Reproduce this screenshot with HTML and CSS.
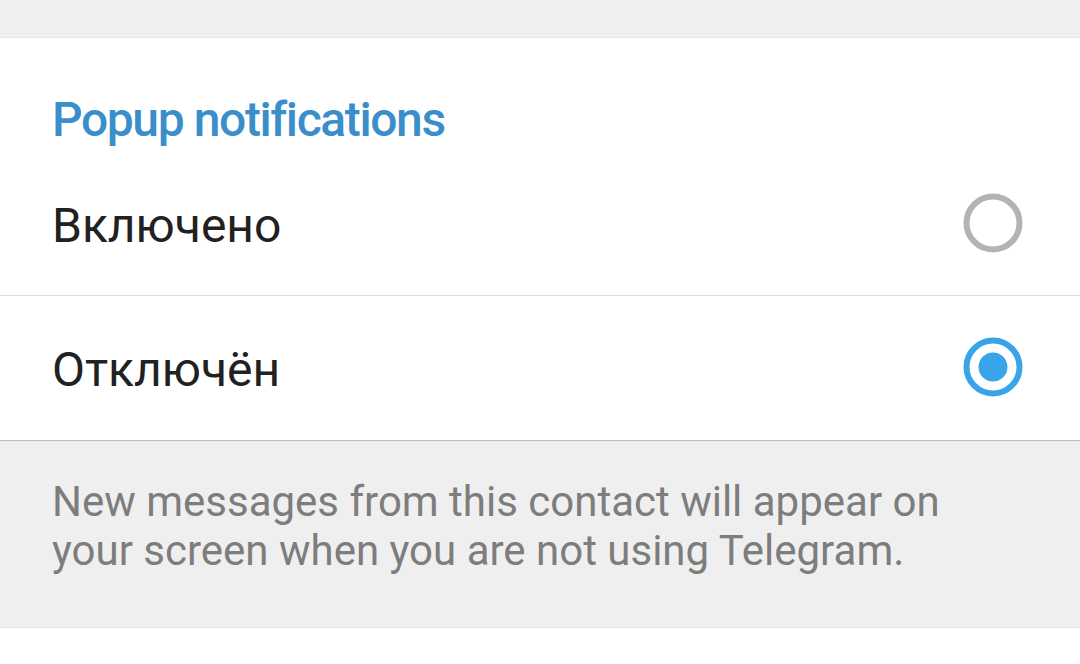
FILE: index.html
```html
<!DOCTYPE html>
<html lang="ru">
<head>
<meta charset="utf-8">
<link rel="stylesheet" href="styles.css">
</head>
<body>
<div class="top-band"></div>
<section class="card">
  <h2 class="card-title">Popup notifications</h2>
  <div class="option">
    <span class="option-label">Включено</span>
    <svg class="radio" width="60" height="60" viewBox="0 0 60 60"><circle cx="30" cy="30" r="26.5" fill="none" stroke="#b3b3b3" stroke-width="6"/></svg>
  </div>
  <div class="option option-last">
    <span class="option-label">Отключён</span>
    <svg class="radio" width="60" height="60" viewBox="0 0 60 60"><circle cx="30" cy="30" r="26.5" fill="none" stroke="#37a5e7" stroke-width="6"/><circle cx="30" cy="30" r="14.5" fill="#37a5e7"/></svg>
  </div>
</section>
<div class="info">
  <p class="info-text">New messages from this contact will appear on your screen when you are not using Telegram.</p>
</div>
<div class="rest"></div>
</body>
</html>
```
FILE: styles.css
```css
html, body {
  margin: 0;
  padding: 0;
  background: #ffffff;
  font-family: Roboto, "Noto Sans", "Liberation Sans", sans-serif;
}
.top-band {
  height: 37px;
  background: #efefef;
  border-bottom: 1px solid #e6e6e6;
}
.card {
  background: #ffffff;
  box-shadow: 0 1px 1px rgba(0,0,0,0.12);
  position: relative;
}
.card-title {
  margin: 0;
  padding: 54px 52px 4px;
  font-size: 48px;
  line-height: 56px;
  font-weight: 500;
  letter-spacing: -1.4px;
  color: #3a8fca;
}
.option {
  height: 144px;
  display: flex;
  align-items: center;
  justify-content: space-between;
  padding: 0 57px 0 52px;
  border-bottom: 1px solid #dcdcdc;
  box-sizing: border-box;
}
.option-last {
  height: 144px;
  border-bottom: none;
}
.option-label {
  font-size: 48px;
  line-height: 56px;
  color: #212121;
  padding-top: 4px;
}
.radio {
  display: block;
  margin-top: -2px;
}
.info {
  background: #efefef;
  border-top: 1px solid #d6d6d6;
  border-bottom: 1px solid #e4e4e4;
  padding: 36px 52px 52px;
}
.info-text {
  margin: 0;
  font-size: 42px;
  line-height: 49px;
  color: #7d7d7d;
}
.rest {
  height: 40px;
  background: #ffffff;
}
```
